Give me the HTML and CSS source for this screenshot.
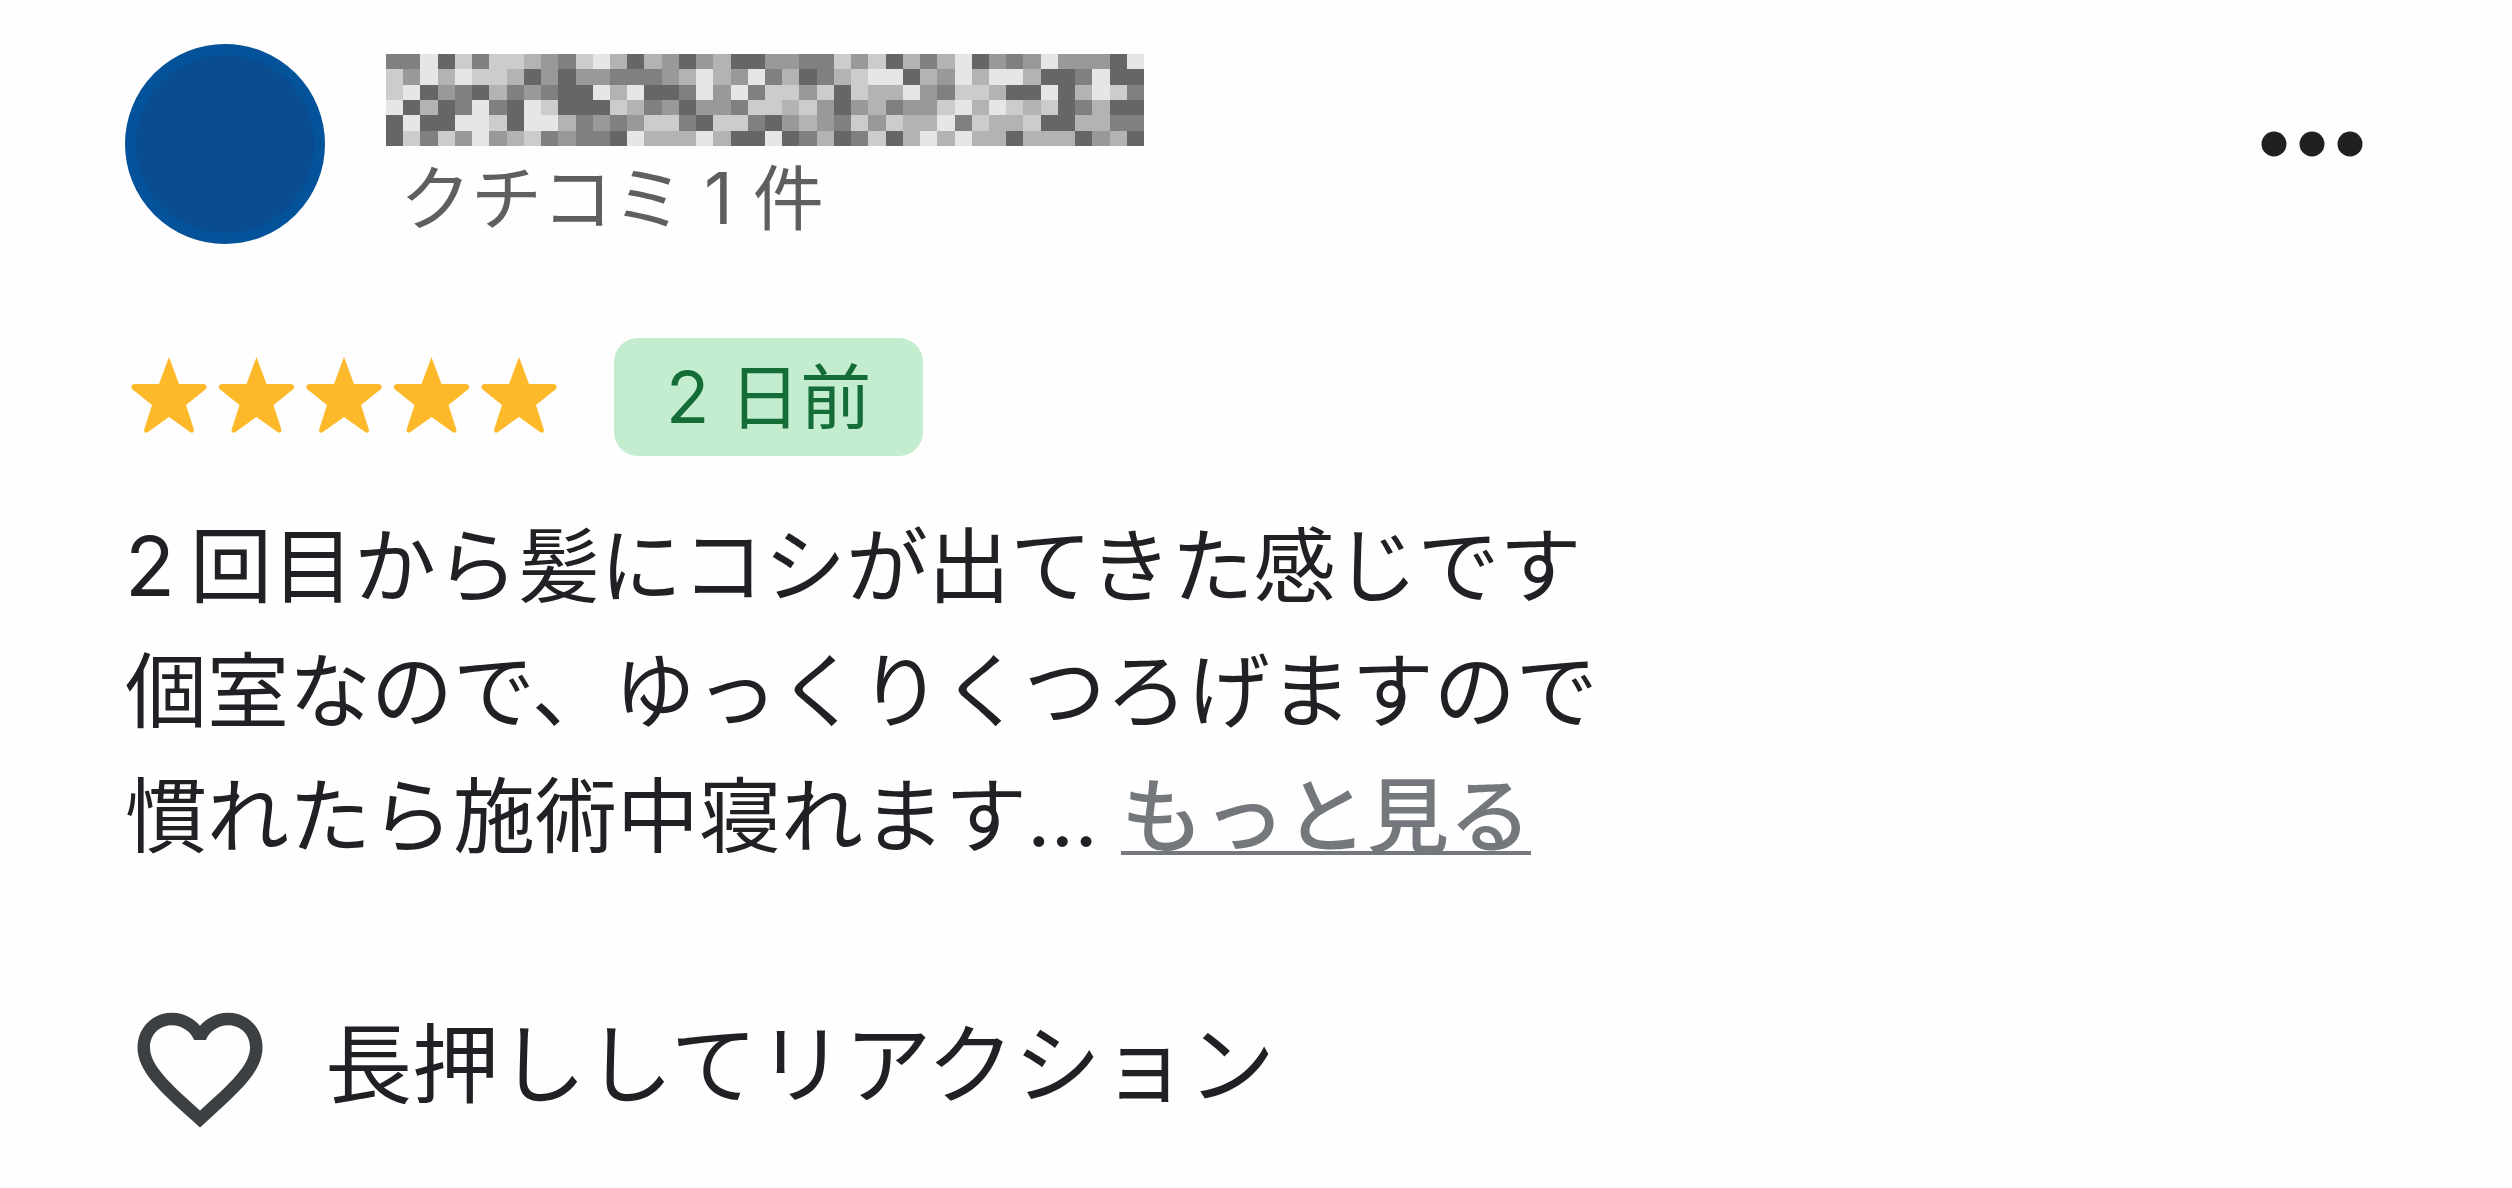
FILE: index.html
```html
<!DOCTYPE html>
<html lang="ja">

<head>
    <meta charset="UTF-8">
    <meta name="viewport" content="width=device-width, initial-scale=1.0">
    <title>クチコミ</title>
    <link rel="stylesheet" href="styles.css">
    <script src="mosaic.js" defer></script>
</head>

<body>
    <article class="review">
        <header class="review-header">
            <div class="avatar"></div>
            <div class="author">
                <svg class="author-name" viewBox="0 0 44 6" preserveAspectRatio="none" shape-rendering="crispEdges" aria-hidden="true"></svg>
                <p class="author-count">クチコミ 1 件</p>
            </div>
            <button class="menu" type="button" aria-label="メニュー">
                <svg class="menu-icon" viewBox="0 0 102 26">
                    <circle cx="13" cy="13" r="12.5" />
                    <circle cx="51" cy="13" r="12.5" />
                    <circle cx="89" cy="13" r="12.5" />
                </svg>
            </button>
        </header>

        <div class="rating">
            <svg class="stars" viewBox="0 0 438 88" role="img" aria-label="5 つ星">
                <defs>
                    <path id="star" d="M44 4 L54 31 L79 31 Q83 32 81 36 L61 52 L69 77 Q69 81 65 79 L44 64 L23 79 Q19 81 19 77 L27 52 L7 36 Q5 32 9 31 L34 31 Z" />
                </defs>
                <use href="#star" x="0" />
                <use href="#star" x="87.5" />
                <use href="#star" x="175" />
                <use href="#star" x="262.5" />
                <use href="#star" x="350" />
            </svg>
            <span class="badge">2 日前</span>
        </div>

        <p class="comment">
            2&thinsp;回目から髪にコシが出てきた感じです<br>
            個室なので、ゆっくりくつろげますので<br>
            慣れたら施術中寝れます... <a class="more" href="#">もっと見る</a>
        </p>

        <button class="reaction" type="button">
            <svg class="heart" viewBox="0 0 24 24" aria-hidden="true">
                <path d="M16.5 3c-1.74 0-3.41.81-4.5 2.09C10.91 3.81 9.24 3 7.5 3 4.42 3 2 5.42 2 8.5c0 3.78 3.4 6.86 8.55 11.54L12 21.35l1.45-1.32C18.6 15.36 22 12.28 22 8.5 22 5.42 19.58 3 16.5 3zm-4.4 15.55l-.1.1-.1-.1C7.14 14.24 4 11.39 4 8.5 4 6.5 5.5 5 7.5 5c1.54 0 3.04.99 3.57 2.36h1.87C13.46 5.99 14.96 5 16.5 5c2 0 3.5 1.5 3.5 3.5 0 2.89-3.14 5.74-7.9 10.05z" />
            </svg>
            <span class="reaction-label">長押ししてリアクション</span>
        </button>
    </article>
</body>

</html>
```

FILE: styles.css
```css
* {
    box-sizing: border-box;
}
body {
    margin: 0;
    background: #fefefe;
    color: #202124;
    font-family: Inter, "Noto Sans CJK JP", sans-serif;
}
button {
    padding: 0;
    border: 0;
    background: none;
    color: inherit;
    font: inherit;
    cursor: pointer;
}
p {
    margin: 0;
}
.review {
    padding: 44px 125px;
}
.review-header {
    display: flex;
    align-items: center;
    height: 200px;
}
.avatar {
    width: 200px;
    height: 200px;
    border: 11px solid #03529a;
    border-radius: 50%;
    background: #094c90;
}
.author {
    margin-left: 61px;
    padding-top: 16px;
}
.author-name {
    display: block;
    width: 758px;
    height: 92px;
}
.author-count {
    padding-left: 14px;
    color: #5f5f5f;
    font-size: 71px;
    line-height: 104px;
}
.menu {
    margin-left: auto;
    margin-right: 24px;
}
.menu-icon {
    display: block;
    width: 102px;
    fill: #202020;
}
.rating {
    display: flex;
    align-items: center;
    gap: 51px;
    margin-top: 94px;
}
.stars {
    width: 438px;
    height: 88px;
    fill: #fdb92a;
}
.badge {
    padding: 0 52px;
    border-radius: 24px;
    background: #c4edd0;
    color: #146c37;
    font-size: 71px;
    line-height: 118px;
}
.comment {
    margin-top: 48px;
    font-size: 82px;
    line-height: 125px;
}
.more {
    color: #74777c;
    font-weight: 500;
    text-decoration: underline;
    text-decoration-thickness: 4px;
    text-decoration-skip-ink: none;
    text-underline-offset: 5px;
}
.reaction {
    display: flex;
    align-items: center;
    gap: 50px;
    margin-top: 115px;
    font-size: 87px;
    line-height: 144px;
}
.reaction-label {
    padding-bottom: 6px;
}
.heart {
    width: 150px;
    height: 150px;
    fill: #3c4043;
}
```

FILE: mosaic.js
```js
// Each digit is the tone of one cell
const tones = ['#666', '#808080', '#999', '#b3b3b3', '#ccc', '#e6e6e6'];
const rows = [
    '11504144321453032023002211424031350212522205',
    '42535443020221112353251301345503253553001500',
    '45021031210053500152514424043352144300503541',
    '50301510540004312022144342023122453543401300',
    '05005540553121244104410232142433514334003311',
    '04142523412110533353005013014035353303330230'
];

const mosaic = document.querySelector('.author-name');
rows.forEach((row, y) => {
    [...row].forEach((tone, x) => {
        const cell = document.createElementNS('http://www.w3.org/2000/svg', 'rect');
        cell.setAttribute('x', x);
        cell.setAttribute('y', y);
        cell.setAttribute('width', 1);
        cell.setAttribute('height', 1);
        cell.setAttribute('fill', tones[tone]);
        mosaic.append(cell);
    });
});
```
